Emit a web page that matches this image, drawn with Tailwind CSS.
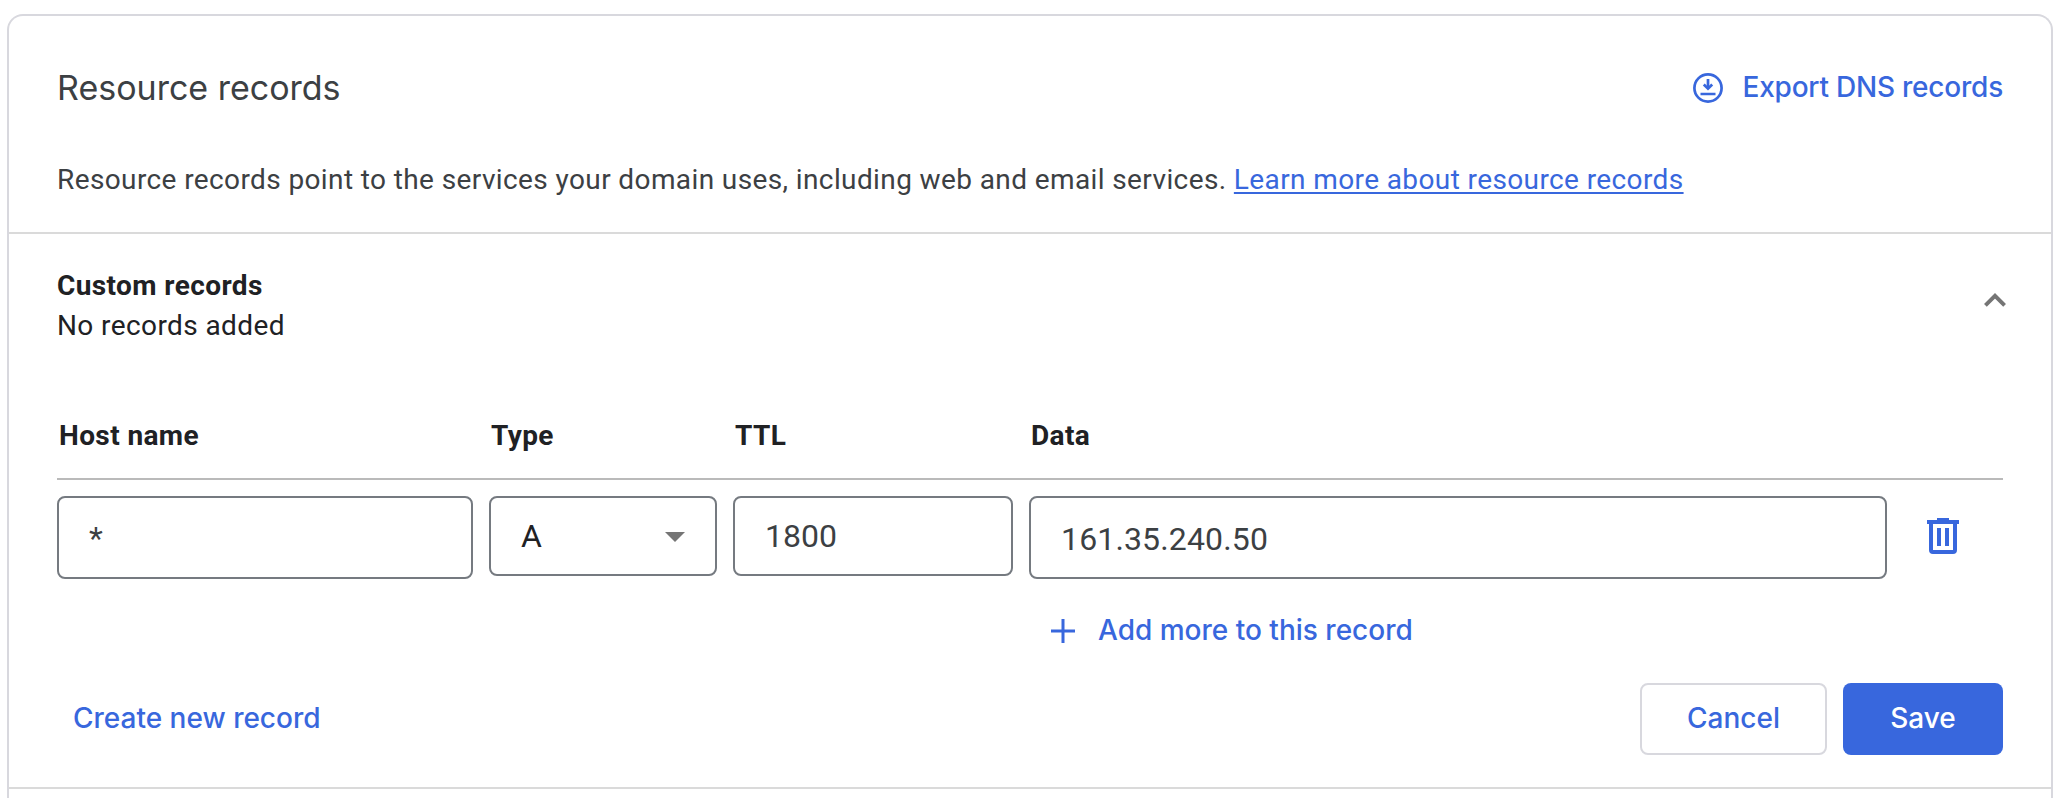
<!DOCTYPE html>
<html lang="en">
<head>
<meta charset="utf-8">
<title>Resource records</title>
<script src="https://cdn.jsdelivr.net/npm/@tailwindcss/browser@4"></script>
</head>
<body class="bg-white pl-[7px] pr-[11px] pt-[14px] font-['Roboto',sans-serif] text-[28px] text-[#202124]">
<main class="h-[784px] rounded-t-2xl border-2 border-b-0 border-[#d8d8de]">
  <header class="h-[218px] border-b-2 border-[#dadada] px-12 text-[#3c4043]">
    <div class="flex h-36 items-center justify-between">
      <h1 class="font-['Inter',sans-serif] text-[34px] leading-[48px] whitespace-nowrap">Resource records</h1>
      <button class="flex items-center gap-5 font-['Inter',sans-serif] font-medium text-[#3867dd]">
        <svg class="size-[30px]" viewBox="0 0 30 30" fill="none" stroke="currentColor" stroke-width="2.7"><circle cx="15" cy="15" r="13.600"/><path d="M15 6v9M7.500 21h15"/><path d="M10.800 11.500l4.200 4.200 4.200-4.200"/></svg>
        <span class="pb-0.5 tracking-[-0.22px]">Export DNS records</span>
      </button>
    </div>
    <p class="leading-[40px] tracking-[0.39px] whitespace-nowrap">Resource records point to the services your domain uses, including web and email services. <a class="text-[#3867dd] underline decoration-2 underline-offset-[3px]">Learn more about resource records</a></p>
  </header>

  <section class="h-[555px] border-b-2 border-[#dadada] px-12">
    <div class="flex h-[166px] justify-between pt-8">
      <div class="leading-[40px] tracking-[0.4px]">
        <h2 class="font-bold">Custom records</h2>
        <p>No records added</p>
      </div>
      <svg class="mt-[27px] -mr-[3px] h-[14px] w-[22px] text-[#757575]" viewBox="0 0 22 14" fill="none" stroke="currentColor" stroke-width="3.900"><path d="M1.400 12.400L11 2.800l9.600 9.600"/></svg>
    </div>

    <div class="grid h-[80px] grid-cols-[416px_228px_280px_858px] gap-4 border-b-2 border-[#bababa] pt-4 leading-[40px] font-bold tracking-[0.4px]">
      <span class="pl-0.5">Host name</span><span class="pl-0.5">Type</span><span class="pl-0.5">TTL</span><span class="pl-0.5">Data</span>
    </div>

    <div class="flex items-start gap-4 pt-4 text-[32px]">
      <div class="flex h-[83px] w-[416px] items-center rounded-lg border-2 border-[#757a80] pl-[30px] text-[#3c4043]">*</div>
      <div class="flex h-[80px] w-[228px] items-center justify-between rounded-lg border-2 border-[#757a80] pr-[30px] pl-[30px]">A
        <svg class="mt-px h-[10px] w-5 fill-[#757575]" viewBox="0 0 20 10"><path d="M0 0h20L10 10z"/></svg>
      </div>
      <div class="flex h-[80px] w-[280px] items-center rounded-lg border-2 border-[#757a80] pl-[30px] text-[#3c4043]">1800</div>
      <div class="flex h-[83px] w-[858px] items-center rounded-lg border-2 border-[#757a80] pt-[3px] pl-[30px] tracking-[0.15px] text-[#3c4043]">161.35.240.50</div>
      <svg class="mt-[22px] ml-6 h-9 w-8 fill-[#3867dd]" viewBox="0 0 32 36"><path fill-rule="evenodd" d="M10 0h12v2h10v4h-2v26a4 4 0 0 1-4 4H6a4 4 0 0 1-4-4V6H0V2h10zM6 6v26h20V6zM10 10h4v18h-4zM18 10h4v18h-4z"/></svg>
    </div>

    <div class="mt-[32px] pl-[994px] font-['Inter',sans-serif] font-medium text-[#3867dd]">
      <button class="flex h-10 items-center gap-[23px]">
        <svg class="size-6" viewBox="0 0 24 24" fill="none" stroke="currentColor" stroke-width="3"><path d="M12 0v24M0 12h24"/></svg>
        <span class="pb-0.5">Add more to this record</span>
      </button>
    </div>

    <div class="mt-[32px] flex h-[72px] items-center gap-4 font-['Inter',sans-serif] font-medium text-[#3867dd]">
      <button class="mr-auto pb-0.5 pl-4">Create new record</button>
      <button class="h-full w-[187px] rounded-lg border-2 border-[#d8d8de] pb-0.5">Cancel</button>
      <button class="h-full w-40 rounded-lg bg-[#3867dd] pb-0.5 text-white">Save</button>
    </div>
  </section>
</main>
</body>
</html>
